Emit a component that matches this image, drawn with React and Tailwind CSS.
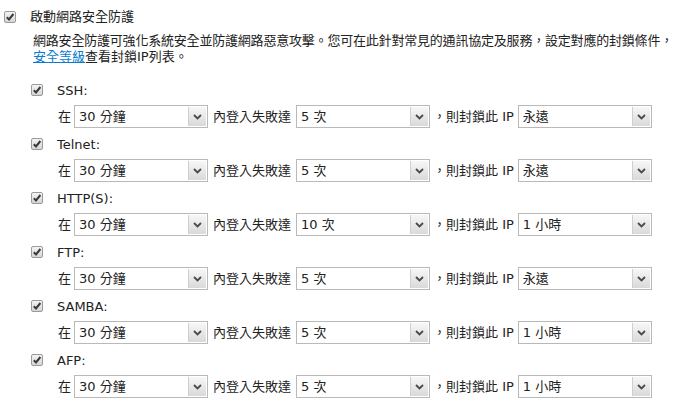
import React from "react";

const FONT = { fontFamily: '"DejaVu Sans", "Noto Sans CJK TC", sans-serif' };

function Check() {
  return (
    <span className="inline-flex h-[12px] w-[12px] shrink-0 items-center justify-center rounded-[2px] border border-[#9a9a9a] bg-gradient-to-b from-[#f4f4f4] to-[#d6d6d6]">
      <svg width="10" height="10" viewBox="0 0 10 10">
        <path d="M1.8 5.2 L4 7.4 L8.4 2" fill="none" stroke="#3a3a3a" strokeWidth="2" />
      </svg>
    </span>
  );
}

function Select({ value }) {
  return (
    <div className="relative flex h-[23px] w-[134px] shrink-0 items-center border border-[#b9b9b9] bg-white pl-[4px]">
      <span className="text-[13px] leading-none text-[#222]">{value}</span>
      <span className="absolute bottom-[1px] right-[1px] top-[1px] flex w-[18px] items-center justify-center border-l border-[#cfcfcf] bg-gradient-to-b from-[#f7f7f7] to-[#d9d9d9]">
        <svg width="9" height="6" viewBox="0 0 9 6">
          <path d="M1 1 L4.5 4.5 L8 1" fill="none" stroke="#4a4a4a" strokeWidth="1.8" />
        </svg>
      </span>
    </div>
  );
}

const groups = [
  { name: "SSH:", times: "5 次", block: "永遠" },
  { name: "Telnet:", times: "5 次", block: "永遠" },
  { name: "HTTP(S):", times: "10 次", block: "1 小時" },
  { name: "FTP:", times: "5 次", block: "永遠" },
  { name: "SAMBA:", times: "5 次", block: "1 小時" },
  { name: "AFP:", times: "5 次", block: "1 小時" },
];

export default function App() {
  return (
    <div className="h-[420px] w-[676px] overflow-hidden bg-white text-[13px] text-[#222]" style={FONT}>
      <div className="flex items-center pl-[4px] pt-[9px]">
        <Check />
        <span className="ml-[14px] leading-[16px]">啟動網路安全防護</span>
      </div>
      <div className="mt-[8px] pl-[33px] pr-0 leading-[16px] whitespace-nowrap">
        <div className="tracking-[-0.2px]">網路安全防護可強化系統安全並防護網路惡意攻擊。您可在此針對常見的通訊協定及服務，設定對應的封鎖條件，</div>
        <div>
          <span className="text-[#0b7bd0] underline">安全等級</span>查看封鎖IP列表。
        </div>
      </div>
      <div className="mt-[16px] flex flex-col gap-[7px] pl-[31px]">
        {groups.map((g) => (
          <div key={g.name} className="flex flex-col gap-[6px]">
            <div className="flex h-[18px] items-center">
              <Check />
              <span className="ml-[14px] leading-none">{g.name}</span>
            </div>
            <div className="flex items-center pl-[27px]">
              <span className="mr-[3px]">在</span>
              <Select value="30 分鐘" />
              <span className="ml-[5px] mr-[5px]">內登入失敗達</span>
              <Select value={g.times} />
              <span className="ml-[3px] mr-[4px]">，則封鎖此 IP</span>
              <Select value={g.block} />
            </div>
          </div>
        ))}
      </div>
    </div>
  );
}
